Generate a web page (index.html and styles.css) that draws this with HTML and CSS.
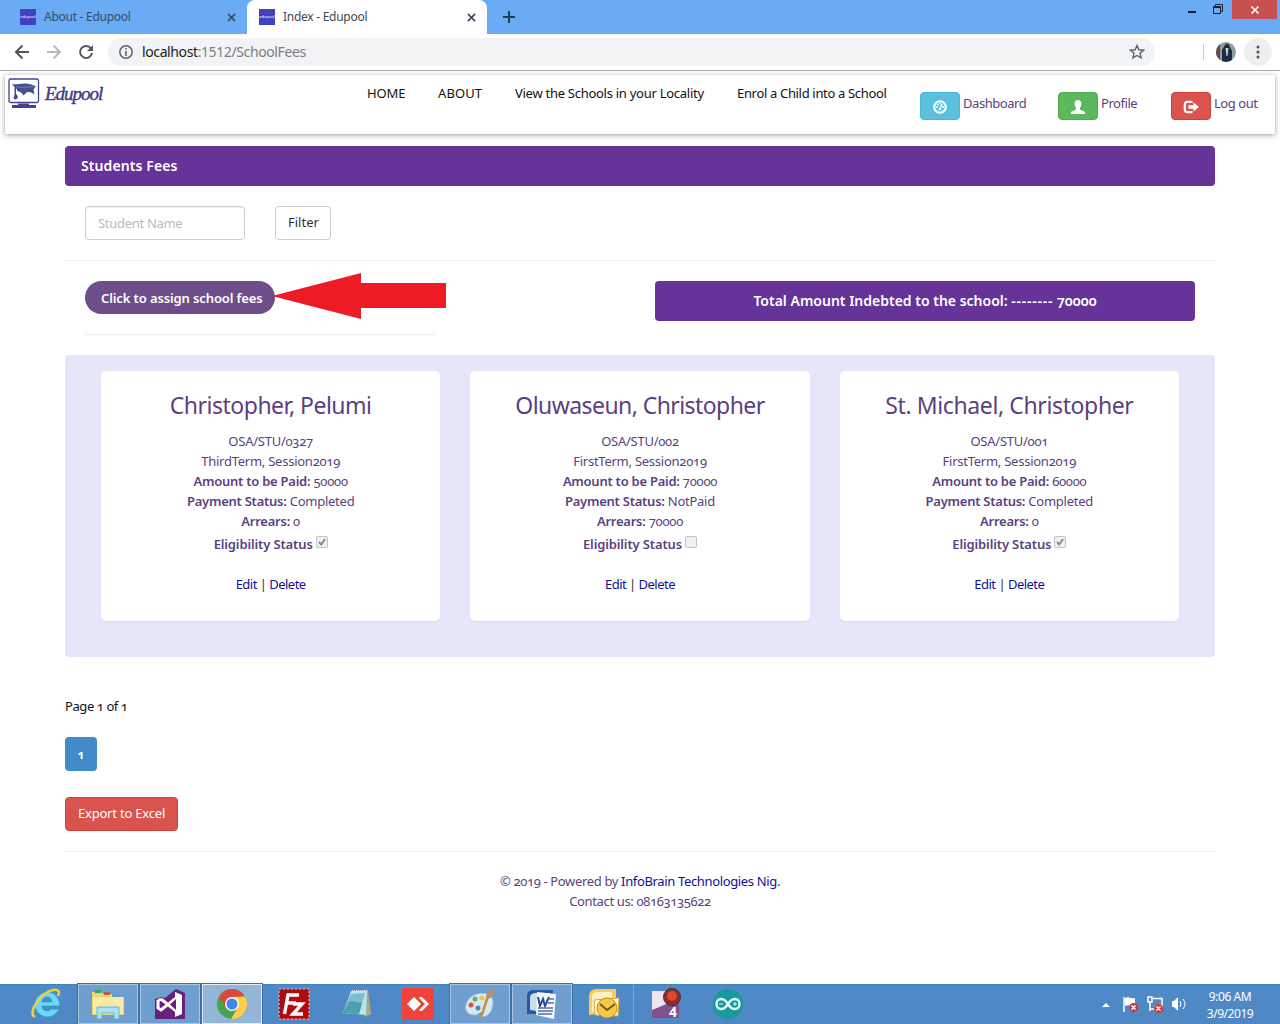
FILE: index.html
```html
<!DOCTYPE html>
<html lang="en">
<head>
<meta charset="utf-8">
<title>Index - Edupool</title>
<link rel="stylesheet" href="styles.css">
</head>
<body>
<div class="screen">
  <div class="tabs">
    <div class="tab"><span class="favicon">edupool</span><span class="tab-title">About - Edupool</span><svg class="x" viewBox="0 0 10 10"><path d="M1 1l8 8M9 1l-8 8"/></svg></div>
    <div class="tab active"><span class="favicon">edupool</span><span class="tab-title">Index - Edupool</span><svg class="x" viewBox="0 0 10 10"><path d="M1 1l8 8M9 1l-8 8"/></svg></div>
    <svg class="plus" viewBox="0 0 12 12"><path d="M6 0v12M0 6h12"/></svg>
    <div class="window-buttons">
      <svg width="45" height="19" viewBox="0 0 45 19"><path d="M8 12h8" stroke="#17212d" stroke-width="2"/><path d="M33.5 6.500h7v7h-7zM33 7.500h8M35.500 6v-1.500h7v7h-2" fill="none" stroke="#17212d"/></svg>
      <div class="close"><svg width="10" height="10" viewBox="0 0 10 10"><path d="M1.500 1.500l7 7M8.500 1.500l-7 7" stroke="#fff" stroke-width="1.500"/></svg></div>
    </div>
  </div>
  <div class="toolbar">
    <svg class="nav-icons" width="94" height="36" viewBox="0 0 94 36" fill="none" stroke-width="2"><path d="M29 18H16M22.500 11.500L16 18l6.500 6.500" stroke="#53565a"/><path d="M47 18h13M53.500 11.500L60 18l-6.500 6.500" stroke="#bababa"/><path d="M91 14.500A6 6 0 1 0 92 19" stroke="#53565a"/><path d="M93 11v6h-6z" fill="#53565a"/></svg>
    <div class="address">
      <svg width="14" height="14" viewBox="0 0 14 14"><circle cx="7" cy="7" r="6.200" fill="none" stroke="#5f6368" stroke-width="1.500"/><path d="M7 6v5M7 3v1.600" stroke="#5f6368" stroke-width="1.600"/></svg>
      <span class="url"><b>localhost</b>:1512/SchoolFees</span>
      <svg class="star" width="16" height="16" viewBox="0 0 16 16"><path d="M8 1.500l1.900 4.300 4.700.4-3.600 3.100 1.100 4.600L8 11.500l-4.100 2.400L5 9.300 1.400 6.200l4.700-.4z" fill="none" stroke="#5f6368" stroke-width="1.400"/></svg>
    </div>
    <div class="separator"></div>
    <svg class="avatar" width="20" height="20" viewBox="0 0 20 20"><clipPath id="face"><circle cx="10" cy="10" r="10"/></clipPath><g clip-path="url(#face)"><path fill="#8ba0a6" d="M0 0h20v20H0z"/><path fill="#6b4545" d="M0 0h4v20H0z"/><path fill="#1f2b45" d="M6 20V8l3-5h4l3 6v11z"/><path fill="#c7d2df" d="M9.500 6h3l-1 8h-1z"/><circle cx="11" cy="3.500" r="2" fill="#30292b"/></g></svg>
    <div class="menu"><svg width="4" height="14" viewBox="0 0 4 14" fill="#505357"><circle cx="2" cy="2" r="1.500"/><circle cx="2" cy="7" r="1.500"/><circle cx="2" cy="12" r="1.500"/></svg></div>
  </div>
  <main class="page">
    <nav class="navbar">
      <div class="brand">
        <svg width="32" height="31" viewBox="0 0 32 31"><rect x="1" y="1" width="29.500" height="23.500" rx="1.500" fill="#fff" stroke="#45438f" stroke-width="1.300"/><path fill="#444487" d="M10 25.500h11V27h7v3H4v-3h6z"/><path d="M4 6c4 1 9-1 14-.5 5 .7 8 2 10 2.500l-2.500 3.500 1 5c-3-2-5-3-8-2l-3 3c-1-2-3-4-6-4.500L8 10v6.500h1l1 3-2 2H6.500l-1-2 1-3V9z" fill="#435094"/><path d="M8 8.500c6 2 12 0 19 0" stroke="#8791bd" fill="none" stroke-width=".7"/></svg>
        <span class="brand-name">Edupool</span>
      </div>
      <ul class="links">
        <li class="n-home">HOME</li><li class="n-about">ABOUT</li><li class="n-view">View the Schools in your Locality</li><li class="n-enrol">Enrol a Child into a School</li>
      </ul>
      <div class="actions">
        <div class="action a-dash"><span class="badge info"><svg width="14" height="14" viewBox="0 0 14 14"><circle cx="7" cy="7" r="5.800" fill="none" stroke="#fff" stroke-width="2.100"/><g fill="#fff"><circle cx="4" cy="7" r=".9"/><circle cx="5" cy="4.500" r=".9"/><circle cx="7" cy="3.500" r=".8"/><circle cx="10.200" cy="7" r=".9"/></g><path d="M9 4L7 9" stroke="#fff" stroke-width="1.400"/><circle cx="7" cy="9" r="1.300" fill="#fff"/></svg></span><span>Dashboard</span></div>
        <div class="action a-prof"><span class="badge success"><svg width="16" height="14" viewBox="0 0 16 14" fill="#fff"><path d="M8 0c2.400 0 3.500 1.600 3.400 4-.1 2-.8 3.100-1.500 4v1.500l4.300 2c.8.400 1 1.100 1 2.500H.8c0-1.400.2-2.100 1-2.500l4.300-2V8C5.400 7.100 4.700 6 4.600 4 4.500 1.600 5.600 0 8 0z"/></svg></span><span>Profile</span></div>
        <div class="action a-log"><span class="badge danger"><svg width="16" height="14" viewBox="0 0 16 14"><path d="M9.500 1.800H4.500C2.800 1.800 1.800 2.800 1.800 4.500v5c0 1.700 1 2.700 2.700 2.700h5" fill="none" stroke="#fff" stroke-width="2.200"/><path d="M5.500 5.200h5V2.500L16 7l-5.500 4.500V8.800h-5z" fill="#fff"/></svg></span><span>Log out</span></div>
      </div>
    </nav>
    <div class="container">
      <header class="heading"><span>Students Fees</span></header>
      <div class="filter"><div class="field"><span>Student Name</span></div><button class="btn"><span>Filter</span></button></div>
      <section class="assign">
        <div class="assign-left">
          <div class="pill"><span>Click to assign school fees</span><svg class="arrow" width="176" height="46" viewBox="0 0 176 46"><path fill="#ed1c24" d="M1 23L90 0V10H175V35H90V46z"/></svg></div>
        </div>
        <div class="total"><span>Total Amount Indebted to the school: <span class="dashes">--------</span> 70000</span></div>
      </section>
      <section class="cards">
        <article class="card">
          <h3 class="t1">Christopher, Pelumi</h3>
          <p class="id">OSA/STU/0327</p><p class="term">ThirdTerm, Session2019</p><p class="amount"><b>Amount to be Paid:</b> 50000</p><p class="status"><b>Payment Status:</b> Completed</p><p class="arrears"><b>Arrears:</b> 0</p>
          <p class="eligible"><b>Eligibility Status</b><span class="check"><svg viewBox="0 0 10 10"><path d="M2 5l2.200 2.500L8 2"/></svg></span></p>
          <p class="crud"><a>Edit</a> | <a>Delete</a></p>
        </article>
        <article class="card">
          <h3 class="t2">Oluwaseun, Christopher</h3>
          <p class="id">OSA/STU/002</p><p class="term">FirstTerm, Session2019</p><p class="amount"><b>Amount to be Paid:</b> 70000</p><p class="status"><b>Payment Status:</b> NotPaid</p><p class="arrears"><b>Arrears:</b> 70000</p>
          <p class="eligible"><b>Eligibility Status</b><span class="check"></span></p>
          <p class="crud"><a>Edit</a> | <a>Delete</a></p>
        </article>
        <article class="card">
          <h3 class="t3">St. Michael, Christopher</h3>
          <p class="id">OSA/STU/001</p><p class="term">FirstTerm, Session2019</p><p class="amount"><b>Amount to be Paid:</b> 60000</p><p class="status"><b>Payment Status:</b> Completed</p><p class="arrears"><b>Arrears:</b> 0</p>
          <p class="eligible"><b>Eligibility Status</b><span class="check"><svg viewBox="0 0 10 10"><path d="M2 5l2.200 2.500L8 2"/></svg></span></p>
          <p class="crud"><a>Edit</a> | <a>Delete</a></p>
        </article>
      </section>
      <div class="page-count">Page 1 of 1</div>
      <div class="page-number">1</div>
      <button class="export"><span>Export to Excel</span></button>
      <footer><p class="copy">© 2019 - Powered by <a>InfoBrain Technologies Nig.</a></p><p class="contact">Contact us: 08163135622</p></footer>
    </div>
  </main>
  <div class="taskbar">
    <div class="task"><svg viewBox="0 0 32 32"><path fill-rule="evenodd" d="M17 4a12.500 12.500 0 1 0 12 17h-8a5 5 0 0 1-9-3h17.500A12.500 12.500 0 0 0 17 4zm-5 10a5 5 0 0 1 10 0z" fill="#6ed6f8" stroke="#239bd5" stroke-width=".7"/><path d="M5 29C-3 25 10 5 23 2c6-1 7 2 5 6" fill="none" stroke="#f1cf3c" stroke-width="2.600"/></svg></div>
    <div class="task open"><svg viewBox="0 0 32 32"><path d="M0 4h9l2 2h10l2 3h9v18H0z" fill="#eed679"/><path d="M1 9h30v17H1z" fill="#f9e9a4"/><path d="M3 2h6v3H3z" fill="#39a451"/><path d="M12 4h6v3h-6z" fill="#c75643"/><path d="M20 6h7v3h-7z" fill="#609dc4"/><path d="M5 31V19h22v12h-5v-6H10v6z" fill="#a8e1f3" stroke="#63b6db"/></svg></div>
    <div class="task open"><svg viewBox="0 0 32 32"><path d="M1 11l6-2 4 1L22 1l9 4v26H1z" fill="#68217a"/><path d="M7 11l-3 2v7l3 2 15-12v13L7 11" fill="none" stroke="#fff" stroke-width="3"/><path d="M21 4l7 3v19l-7 3z" fill="#fff"/><path d="M22 11v11l-6-5.500z" fill="#68217a"/></svg></div>
    <div class="task open current"><svg viewBox="0 0 32 32"><circle cx="16" cy="16" r="15" fill="#4aa352"/><path d="M3 8.500A15 15 0 0 1 29 8.500L16 9l-6.500 10z" fill="#db4b3c"/><path d="M29 8.500A15 15 0 0 1 15 31l7-12-6-10z" fill="#fcce4b"/><circle cx="16" cy="16" r="7" fill="#f5f6f4"/><circle cx="16" cy="16" r="5.500" fill="#4285e8"/></svg></div>
    <div class="task"><svg viewBox="0 0 32 32"><path d="M1 1h30v30H1z" fill="#b30b0d" stroke="#f5cccc" stroke-width="1" stroke-dasharray="2 2"/><path d="M6.500 26L10 7h11M9 15h9M15 16h9l-9 10h10" fill="none" stroke="#fff" stroke-width="3.400"/></svg></div>
    <div class="task"><svg viewBox="0 0 32 32"><path d="M12 3l16-1 3 24-6 3z" fill="#adab83"/><path d="M11 3h16l-1 24-23-2z" fill="#b6e6ec"/><path d="M11 6L2 25l17 1 6-21z" fill="#79bfcb"/><path d="M10 13L2 25l17 1 3-11z" fill="#4d9fae"/><path d="M12 3h15" stroke="#ddd" stroke-width="2" stroke-dasharray="1 1"/></svg></div>
    <div class="task"><svg viewBox="0 0 32 32"><rect width="32" height="32" rx="2" fill="#ef443b"/><path d="M12 9l7 7-7 7-7-7zM18 9l2 0 7 7-7 7h-2l-1-1 6-6-6-6z" fill="#fff"/></svg></div>
    <div class="task open"><svg viewBox="0 0 32 32"><path d="M2 16C6 5 18 3 26 7c6 5 3 21-7 22l-2-5-4 3C4 28 0 23 2 16z" fill="#d3e9f6" stroke="#8ab1cf"/><circle cx="7" cy="17" r="2.500" fill="#d65240"/><circle cx="11" cy="11" r="2.500" fill="#67ad62"/><circle cx="18" cy="10" r="2.500" fill="#f1c84d"/><circle cx="14" cy="20" r="2.500" fill="#5587b4"/><path d="M17 30L24 8" stroke="#d18c43" stroke-width="2.500"/><path d="M22 8l2-5 7-2-2 7-4 3z" fill="#b89069"/></svg></div>
    <div class="task open"><svg viewBox="0 0 32 32"><path d="M1 22V8q0-5 5-6h21v24H1z" fill="#2858a2"/><path d="M4 22V10q0-5 6-5h14v20z" fill="#cbdcf0"/><path d="M11 4l19 2-2 25-18-4z" fill="#f7f9fc"/><path d="M12 9l2 9 3-7 2 7 4-9" stroke="#244d93" stroke-width="2" fill="none"/><path d="M22 11h6M22 15h6M12 20h15M12 23h15M12 26h14" stroke="#5270a5" stroke-width="1.400"/></svg></div>
    <div class="task divided"><svg viewBox="0 0 32 32"><path d="M1 27V8q0-6 7-7h20v23z" fill="#f7cb61"/><path d="M4 24V9q0-5 6-5h14v20z" fill="#fff0bf"/><path d="M6 12l25-2-1 18-23-1z" fill="#fff8dc" stroke="#e0a931"/><circle cx="19" cy="20" r="10" fill="#f5cb45" stroke="#c3891f"/><path d="M12 16l7 6 8-6" fill="none" stroke="#7c5517" stroke-width="2"/></svg></div>
    <div class="task"><svg viewBox="0 0 32 32"><path d="M2 3h27v27H2z" fill="#eee5ef"/><path d="M2 22l12-5 15-8v21H2z" fill="#83508e"/><circle cx="22" cy="9" r="8.500" fill="#872f2d" stroke="#3e302d"/><circle cx="22" cy="8" r="5" fill="#e3452e"/><text x="19" y="29" class="four">4</text></svg></div>
    <div class="task"><svg viewBox="0 0 32 32"><circle cx="16" cy="16" r="15" fill="#159a9d"/><path d="M16 16c-3-5-5-5-7-5-6 0-6 10 0 10 2 0 4 0 7-5s5-5 7-5c6 0 6 10 0 10-2 0-4 0-7-5z" fill="none" stroke="#e4f4f4" stroke-width="2.500"/><path d="M7 16h4M21 16h4M23 14v4" stroke="#e4f4f4"/></svg></div>
    <div class="tray">
      <svg width="88" height="22" viewBox="0 0 88 22"><path d="M2 14l4-4 4 4z" fill="#fff"/><path d="M24 4v15" stroke="#fff" stroke-width="1.500"/><path d="M25 5c4-2 5 1 10 0v8c-5 1-6-2-10 0z" fill="#fff"/><g stroke="#fff" fill="none"><path d="M53 5.500h9v8h-8" stroke-width="1.500"/><path d="M48 4v5h4V4zM50 9v9M50 16h8" stroke-width="1.500"/></g><g fill="#d73632"><circle cx="33.500" cy="14.500" r="4.500"/><circle cx="58.500" cy="15.500" r="4.500"/></g><path d="M31.500 12.500l4 4m0-4l-4 4M56.500 13.500l4 4m0-4l-4 4" stroke="#fff" stroke-width="1.500"/><path d="M72 8h2l4-4v14l-4-4h-2z" fill="#fff"/><path d="M80 8q2 3 0 6M83 6q4 5 0 10" stroke="#fff" fill="none"/></svg>
      <div class="clock"><div>9:06 AM</div><div>3/9/2019</div></div>
    </div>
  </div>
</div>
</body>
</html>
```
FILE: styles.css
```css
*{box-sizing:border-box}
body{margin:0;font:14px/20px "Noto Sans",sans-serif;background:#fff;color:#222}
p,h3,ul{margin:0;padding:0}
svg{display:block;flex:none}
.screen{width:1280px;height:1024px;display:flex;flex-direction:column;overflow:hidden}
.tabs{height:34px;background:#6aabf5;display:flex;flex:none}
.tab{width:247px;display:flex;align-items:center;padding:0 11px 0 20px;font-size:12px;color:#334d6c}
.tab.active{width:240px;background:#fff;border-radius:8px 8px 0 0;padding-left:12px;color:#45494d}
.favicon{width:16px;height:16px;background:#4042c2;color:#fff;font-size:4px;line-height:16px;text-align:center;margin-right:8px;flex:none}
.tab-title{flex:1;letter-spacing:-.27px;white-space:nowrap}
.x{width:9px;height:9px;stroke:#35485a;stroke-width:1.7}
.plus{width:12px;height:12px;margin:11px 0 0 16px;stroke:#263c55;stroke-width:2}
.window-buttons{display:flex;margin-left:auto}
.window-buttons>svg{margin-right:7px}
.close{width:45px;height:19px;background:#c75050;display:flex;align-items:center;justify-content:center;margin-right:3px}
.toolbar{height:37px;border-bottom:1px solid #aaa;display:flex;flex:none;align-items:center}
.address{width:1047px;height:28px;margin-left:14px;background:#f1f3f4;border-radius:14px;display:flex;align-items:center;padding:0 10px 0 11px}
.url{font-size:14px;letter-spacing:-.39px;margin-left:9px;color:#7c7f83}
.url b{font-weight:400;color:#222}
.star{margin-left:auto}
.separator{width:1px;height:16px;background:#c8cacc;margin-left:48px}
.avatar{margin-left:12px}
.menu{width:28px;height:28px;border-radius:50%;background:#eee;margin-left:8px;display:flex;align-items:center;justify-content:center}
.page{height:913px;flex:none;padding:4px 5px 0;font-size:13px;color:#5b3f82;font-variant-numeric:oldstyle-nums;white-space:nowrap}
.navbar{height:59px;box-shadow:0 1px 5px rgba(0,0,0,.4);display:flex;align-items:flex-start}
.brand{width:362px;display:flex;align-items:center;padding:3px 0 0 3px;gap:5px}
.brand-name{font:italic 19px "Liberation Serif",serif;color:#403b87;letter-spacing:-1px;-webkit-text-stroke:.4px #403b87}
.links{display:flex;gap:32px;list-style:none;color:#111;padding-top:8px}
.n-home{width:39px}.n-about{width:45px}.n-view{width:190px}.n-enrol{width:151px}
.links li{letter-spacing:-.27px}
.links .n-home{letter-spacing:-.1px}.links .n-about{letter-spacing:.1px}.links .n-enrol{letter-spacing:-.33px}
.actions{display:flex;margin-left:32px;padding-top:17px}
.action{display:flex;gap:3px;letter-spacing:-.45px;line-height:22px}
.a-dash{width:138px}.a-prof{width:113px}
.badge{width:40px;height:28px;border:1px solid #46b8da;border-radius:4px;display:flex;align-items:center;justify-content:center;padding-top:2px}
.info{background:#5bc0de}.success{background:#5cb85c;border-color:#4cae4c}.danger{background:#d9534f;border-color:#d43f3a}
.container{width:1150px;margin:12px auto 0}
.heading{height:40px;border-radius:4px;background:#663399;color:#fff;font-weight:600;font-size:14px;line-height:40px;padding-left:16px;letter-spacing:.1px}
.filter{height:75px;padding:20px;border-bottom:1px solid #eee;display:flex;gap:30px}
.field,.btn{height:34px;border:1px solid #ccc;border-radius:4px;background:#fff;padding:5px 12px 7px;font:13px/20px "Noto Sans",sans-serif;letter-spacing:-.3px;color:#333}
.field{width:160px;padding-top:6px;color:#bbb;box-shadow:inset 0 1px 1px rgba(0,0,0,.075)}
.btn{width:56px;letter-spacing:0}
.assign{height:94px;display:flex;justify-content:space-between;padding:20px 20px 0}
.assign-left{width:350px;height:54px;border-bottom:1px solid #eee}
.pill{width:190px;height:33px;border-radius:17px;background:#6d4e8a;color:#fff;font-weight:600;line-height:34px;padding-left:16px;letter-spacing:-.11px;position:relative}
.arrow{position:absolute;left:186px;top:-8px}
.total{width:540px;height:40px;background:#663399;color:#fff;border-radius:4px;font-size:14px;font-weight:600;line-height:40px;text-align:center;letter-spacing:0}
.dashes{letter-spacing:.75px}
.cards{height:302px;background:#e6e6fa;border-radius:4px;padding:16px 36px;display:grid;grid-template-columns:repeat(3,1fr);gap:30px;align-items:start}
.card{height:250px;background:#fff;border-radius:5px;padding-top:20px;text-align:center;box-shadow:0 1px 2px rgba(0,0,0,.06)}
.card h3{font-size:23px;font-weight:400;line-height:28px;margin-bottom:12px;letter-spacing:-.5px}
.card .t2{letter-spacing:-.57px}.card .t3{letter-spacing:-.38px}
.card p{height:20px;letter-spacing:-.25px}
.card b{font-weight:600}
.card .eligible{height:23px;padding-top:3px;display:flex;justify-content:center;gap:3px;letter-spacing:-.13px}
.check{width:12px;height:12px;border:1px solid #c4c4c4;border-radius:2px;background:#f0f0f0;margin-top:2px}
.check path{fill:none;stroke:#888;stroke-width:2}
.card .crud{margin-top:20px;color:#333;letter-spacing:-.52px}
a{color:#120f9a}
.page-count{margin-top:39px;color:#111;letter-spacing:-.42px}
.page-number{width:32px;height:34px;background:#428bca;color:#fff;border-radius:4px;text-align:center;font-weight:600;line-height:34px;margin-top:21px}
.export{display:block;width:113px;height:34px;background:#d9534f;color:#fff;border:1px solid #d43f3a;border-radius:4px;font:13px/20px "Noto Sans",sans-serif;padding:5px 0 7px;margin-top:26px;letter-spacing:-.2px}
footer{margin-top:20px;border-top:1px solid #eee;padding-top:19px;text-align:center;letter-spacing:-.35px}
.taskbar{height:40px;background:linear-gradient(#427fb8,#508bc8 2px,#4e87c2);display:flex;flex:none;padding:0 20px 0 16px;gap:2px}
.task{width:60px;height:40px;display:flex;justify-content:center;align-items:center}
.task>svg{width:32px;height:32px}
.open{border:1px solid #a9c5df;background:#709fcf;outline:1px solid #3e70a5}
.current{background:#94b5d8;border-color:#e0ecf7}
.divided{border-right:1px solid #7ba8d8}
.four{font:bold 14px "Noto Sans",sans-serif;fill:#fff}
.tray{display:flex;align-items:center;margin-left:auto;color:#fff;font-size:12px}
.clock{width:60px;text-align:center;line-height:17px;margin-left:12px;letter-spacing:-.45px;padding-top:2px}
```
